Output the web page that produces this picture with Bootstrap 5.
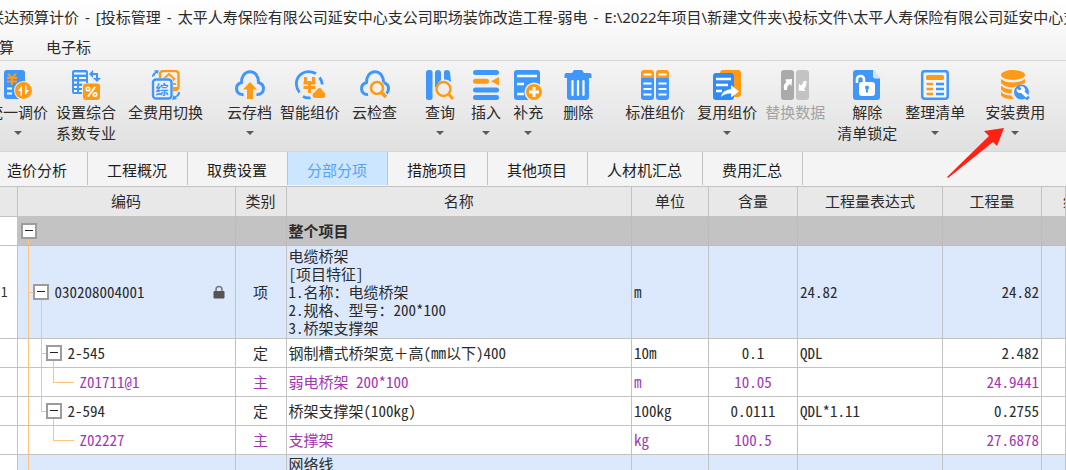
<!DOCTYPE html>
<html lang="zh-CN">
<head>
<meta charset="utf-8">
<meta name="viewport" content="width=device-width, initial-scale=1">
<title>投标管理</title>
<link href="https://cdn.jsdelivr.net/npm/bootstrap@5.3.0/dist/css/bootstrap.min.css" rel="stylesheet">
<script src="https://cdn.jsdelivr.net/npm/bootstrap@5.3.0/dist/js/bootstrap.bundle.min.js"></script>
<style>
:root{--line:#c3c3c3;--guide:#fcc47c}
body{font-family:"Noto Sans CJK SC",sans-serif;font-size:15px;line-height:21px;color:#2b2b2b;background:#fff;height:100vh;overflow:hidden}
.app-head{background:linear-gradient(#fff,#f1f1f1);border-bottom:1px solid #d6d6d6}
.title-line{font-family:"Noto Sans","Noto Sans CJK SC",sans-serif;height:34px;margin-left:-11px;white-space:nowrap}
.title-line .dash{margin:0 6px}
.menu-line{height:26px;margin-left:-16px;gap:32px;padding-bottom:2px}
.menu-line a{color:inherit;text-decoration:none}
.ribbon{background:linear-gradient(#f4f4f4,#e0e0e0);border-bottom:1px solid #d6d6d6;padding:9px 0 8px}
.tool{--bs-btn-padding-x:0;--bs-btn-padding-y:0;--bs-btn-border-width:0;--bs-btn-font-size:15px;--bs-btn-line-height:21px;--bs-btn-color:#2b2b2b;--bs-btn-disabled-color:#a3a3a3;--bs-btn-disabled-opacity:1;flex:none;white-space:nowrap;margin-right:12px}
.tool svg.ico{width:30px;height:30px;margin-bottom:1px}
.tool .caret{border:4px solid transparent;border-top-color:#5a5a5a;border-bottom:0;margin-top:9px}
.ribbon>.tool:first-child{margin-left:-12px}
.gap-s{margin-right:8px}.gap-m{margin-right:16px}.gap-l{margin-right:20px}.gap-xl{margin-right:28px}.gap-xxl{margin-right:32px}
.pointer{left:-39px;top:57px;width:60px;height:52px;pointer-events:none}
.tab-strip{background:#f4f4f4;border-bottom:1px solid var(--line);padding-bottom:1px}
.tab-strip .nav{margin-left:-12px}
.tab-strip .nav-link{color:#1c1c1c;border-radius:0;border-right:1px solid var(--line);padding:7px 20px 5px 19px;line-height:21px}
.tab-strip .nav-link.active{background:#cbe6fe;color:#55a3f8}
.bill{table-layout:fixed;width:100%;border-collapse:collapse;font-feature-settings:"hwid";line-height:18px}
.bill th,.bill td{border-right:1px solid var(--line);border-bottom:1px solid var(--line);height:29px;padding:0 2px;overflow:hidden;white-space:nowrap;vertical-align:middle}
.bill th{background:#e8e8e8;font-weight:400;text-align:center}
.bill .peek{padding-left:21px;text-align:left}
.bill .row-no{font-size:13px;padding:0 1px}
.bill .tall td{height:93px}
.bill .picked td:not(.row-no){background:#dce9fd}
.bill .whole td:not(.row-no){background:#c3c3c3;border-color:#bcbcbc}
.bill .material{color:#a435b4}
.bill .code{position:relative}
.wide-glyph{font-feature-settings:normal}
.box{width:16px;height:16px;border:2px solid #9c9c9c;background:#fff;padding:0;flex:none;position:relative;z-index:1}
.box::before{content:"";width:8px;height:1px;background:#222}
.branch{display:flex;align-items:center;gap:6px}
.lv0{padding-left:1px}.lv1{padding-left:13px}.lv2{padding-left:26px}.lv3{padding-left:60px}
.rail{position:absolute;top:0;bottom:0;width:1px;background:var(--guide)}
.rail.half{bottom:50%}.rail.low{top:50%}
.arm{position:absolute;top:50%;height:1px;width:6px;background:var(--guide)}
.arm.long{width:21px}
.at0{left:10px}.at1{left:23px}.at2{left:35px}
</style>
</head>
<body>
<header class="app-head">
  <div class="title-line d-flex align-items-center">联达预算计价<span class="dash">-</span>[投标管理<span class="dash">-</span>太平人寿保险有限公司延安中心支公司职场装饰改造工程-弱电<span class="dash">-</span>E:\2022年项目\新建文件夹\投标文件\太平人寿保险有限公司延安中心支公司</div>
  <nav class="menu-line d-flex align-items-center"><a href="#">预算</a><a href="#">电子标</a></nav>
</header>

<div class="ribbon d-flex align-items-start">
  <button type="button" class="btn tool gap-s d-flex flex-column align-items-center"><svg class="ico" viewBox="0 0 30 30"><rect x="1" width="21" height="29" rx="3" fill="#3f97fb"/><path d="M5 4l4 4 4-4M9 8v7M4 8h10M4 11.500h10" stroke="#ff9a17" stroke-width="2" fill="none"/><path d="M4 18.500h5M4 23.500h5" stroke="#fff" stroke-width="2"/><circle cx="20.500" cy="20.500" r="9.500" fill="#f0f0f0"/><circle cx="20.500" cy="20.500" r="8.500" fill="#ff9a17"/><path d="M19 25.500v-10l-4 5.500h2.500v4.500zM22 15.500v10l4-5.500h-2.500v-4.500z" fill="#fff"/></svg>统一调价<span class="caret"></span></button>
  <button type="button" class="btn tool d-flex flex-column align-items-center"><svg class="ico" viewBox="0 0 30 30"><path d="M3 0h12q2 0 2 2v11h-4q-2 0-2 2v9H3q-2 0-2-2V2q0-2 2-2z" fill="#3f97fb"/><path d="M3 3.500h12M3 8h3M8 8h7M3 12.500h3M8 12.500h7M3 17h3M8 17h3M3 21h3M8 21h3" stroke="#fff" stroke-width="2"/><path d="M22 0v8l-4-4zM30 8h-8l4 4z" fill="#3f97fb"/><path d="M21 4h5v5" stroke="#3f97fb" stroke-width="2" fill="none"/><rect x="12" y="13.500" width="17" height="16.500" rx="3" fill="#ff9a17"/><path d="M24 17l-7 9.500" stroke="#fff" stroke-width="2"/><circle cx="17" cy="19" r="1.700" fill="none" stroke="#fff" stroke-width="1.600"/><circle cx="24" cy="24.500" r="1.700" fill="none" stroke="#fff" stroke-width="1.600"/></svg>设置综合<span>系数专业</span></button>
  <button type="button" class="btn tool gap-l d-flex flex-column align-items-center me-4"><svg class="ico" viewBox="0 0 30 30"><rect x="9" y="1" width="18.500" height="19" rx="3" fill="none" stroke="#ff9a17" stroke-width="2.400"/><path d="M12 9.500l6-5.500 6 5.500M14 10h9M22 14h3M22 18h4" fill="none" stroke="#ff9a17" stroke-width="2"/><rect x="0" y="8" width="22" height="22" rx="3" fill="#f0f0f0"/><rect x="2" y="9.500" width="18.500" height="19" rx="3" fill="none" stroke="#3f97fb" stroke-width="2.400"/><text x="4.500" y="24" font-size="13" font-weight="700" fill="#3f97fb">综</text><path d="M1 7q0-3.500 3-5l-1-1.500L7.500 0 7 4 5.500 3Q4 4 3.500 6zM29 22q0 4-4 5.500l1 1.500-5 1 1.500-5 1 1.500q3-1 3.500-4.500z" fill="#3f97fb"/></svg>全费用切换</button>
  <button type="button" class="btn tool gap-s d-flex flex-column align-items-center"><svg class="ico" viewBox="0 0 30 30"><path d="M8.500 24.500C4 25 1.500 22 1.500 18.500c0-3 2-5 5-6C6.500 6 10 1.700 15 1.700S23.500 6 23.500 12.500c3 1 5 3 5 6 0 3.500-2.500 6.500-7 6" fill="none" stroke="#3f97fb" stroke-width="3"/><path d="M15 12l7 7.500h-4V29h-6v-9.500H8z" fill="#ff9a17"/></svg>云存档<span class="caret"></span></button>
  <button type="button" class="btn tool d-flex flex-column align-items-center"><svg class="ico" viewBox="0 0 30 30"><path d="M4.500 22.500C-.5 16 .5 7 7.500 3.200c4-2.200 8-2.200 13.500.3M24.500 7.500q2.500 3 2.800 7M8 26.500q3.500 2 7.500 1.200" fill="none" stroke="#3f97fb" stroke-width="2.800"/><path d="M10.500 7v5M18.500 7v5M8.500 13h12M8.500 17.500h12M14.500 11v12" fill="none" stroke="#ff9a17" stroke-width="3"/><path d="M20.500 28q-3 0-3-3 0-2 2.500-3l3-3.500q1.500-1 3 0l2.500 3.500q2 1 2 3 0 3-3 3z" fill="#ff9a17"/></svg>智能组价</button>
  <button type="button" class="btn tool gap-xl d-flex flex-column align-items-center"><svg class="ico" viewBox="0 0 30 30"><path d="M8 24.500C4 25 1.500 22 1.500 18.500c0-3 2-5 5-6C6.500 6 10 1.700 15 1.700S23.500 6 23.500 12.500c3 1 5 3 5 6q0 3-2 5" fill="none" stroke="#3f97fb" stroke-width="3"/><circle cx="17" cy="18" r="8" fill="#f0f0f0"/><circle cx="17" cy="18" r="6" fill="none" stroke="#ff9a17" stroke-width="2.600"/><path d="M21 22l5 5" stroke="#ff9a17" stroke-width="3.500"/></svg>云检查</button>
  <button type="button" class="btn tool gap-m d-flex flex-column align-items-center"><svg class="ico" viewBox="0 0 30 30"><rect x="1" width="6.500" height="30" rx="2.500" fill="#3f97fb"/><path d="M10 3q0-3 3-3t3 3v7l-3 3v4h-3zM19 2q0-2 3-2 2.500 0 3 2l1 10q-3-3-7-2.500z" fill="#3f97fb"/><circle cx="18.500" cy="19" r="7" fill="none" stroke="#ff9a17" stroke-width="2.500"/><path d="M23.500 24l4.500 5" stroke="#ff9a17" stroke-width="3"/></svg>查询<span class="caret"></span></button>
  <button type="button" class="btn tool d-flex flex-column align-items-center"><svg class="ico" viewBox="0 0 30 30"><path d="M4.500 2.500h21M4.500 20h21M4.500 27.500h21" stroke="#3f97fb" stroke-width="5" stroke-linecap="round"/><path d="M4.500 11.300h11" stroke="#ff9a17" stroke-width="5" stroke-linecap="round"/><path d="M20 11.300L28 7v8.600z" fill="#ff9a17"/></svg>插入<span class="caret"></span></button>
  <button type="button" class="btn tool gap-l d-flex flex-column align-items-center"><svg class="ico" viewBox="0 0 30 30"><rect x="1" width="26" height="30" rx="3" fill="#3f97fb"/><path d="M4 6h20M4 14h7M4 24h7" stroke="#fff" stroke-width="2.500"/><circle cx="21" cy="22" r="9.500" fill="#f0f0f0"/><circle cx="21" cy="22" r="8" fill="#ff9a17"/><path d="M16 22h10M21 17v10" stroke="#fff" stroke-width="3"/></svg>补充<span class="caret"></span></button>
  <button type="button" class="btn tool gap-xxl d-flex flex-column align-items-center"><svg class="ico" viewBox="0 0 30 30"><path d="M9 3l2-3h8l2 3h5.500q2 0 2 2v3H26v19q0 3-3 3H7q-3 0-3-3V8H1.500V5q0-2 2-2z" fill="#3f97fb"/><path d="M9.500 11v14M15 11v14M20.500 11v14" stroke="#fff" stroke-width="2.200" stroke-linecap="round"/></svg>删除</button>
  <button type="button" class="btn tool d-flex flex-column align-items-center"><svg class="ico" viewBox="0 0 30 30"><path d="M1 8V3q0-3 3-3h7q3 0 3 3v5zM16 8V3q0-3 3-3h7q3 0 3 3v5z" fill="#ff9a17"/><path d="M1 8h13v19q0 3-3 3H4q-3 0-3-3zM16 8h13v19q0 3-3 3h-7q-3 0-3-3z" fill="#3f97fb"/><path d="M3.500 4.500h8M18.500 4.500h8M3.500 13.500h8M18.500 13.500h8M3.500 19h8M18.500 19h8M3.500 24.500h8M18.500 24.500h8" stroke="#fff" stroke-width="2"/></svg>标准组价</button>
  <button type="button" class="btn tool gap-s d-flex flex-column align-items-center"><svg class="ico" viewBox="0 0 30 30"><rect x="8" width="21" height="27" rx="3" fill="#ff9a17"/><rect x="1" y="3" width="21" height="27" rx="3" fill="#2f8bf8"/><path d="M4 9h15M4 15h12M4 21h6" stroke="#fff" stroke-width="2.500"/><path d="M9 27q1-7 10-8v-4l8 6.500-8 6v-4q-6-.5-10 3.500z" fill="#fff"/></svg>复用组价<span class="caret"></span></button>
  <button type="button" class="btn tool d-flex flex-column align-items-center" disabled><svg class="ico" viewBox="0 0 30 30"><rect x="1" width="13" height="30" rx="3" fill="#aaa"/><rect x="16" width="13" height="30" rx="3" fill="#c3c3c3"/><path d="M4 20q-1-6 2.500-8L5 9.500l7-.5-.5 7-2-2Q7 16 7 20zM26.500 11q0 6-2.500 8l1.500 2-7-.5.5-7 2 2Q23 14 23.500 11z" fill="#fff"/></svg>替换数据</button>
  <button type="button" class="btn tool gap-s d-flex flex-column align-items-center"><svg class="ico" viewBox="0 0 30 30"><path d="M4 0h17l7 8v19q0 3-3 3H4q-3 0-3-3V3q0-3 3-3z" fill="#3f97fb"/><path d="M21 0l8 8.500h-6q-2 0-2-2z" fill="#cfe6ff"/><rect x="7" y="12" width="16" height="14" rx="3" fill="#fff"/><path d="M5 13V9.500q0-3.500 3.500-3.500T12 9.500V13" fill="none" stroke="#fff" stroke-width="2.600"/><circle cx="15" cy="17.500" r="2" fill="#3f97fb"/><path d="M15 18v4.500" stroke="#3f97fb" stroke-width="2"/></svg>解除<span>清单锁定</span></button>
  <button type="button" class="btn tool gap-l d-flex flex-column align-items-center"><svg class="ico" viewBox="0 0 30 30"><rect x="2.200" y="1.200" width="25.500" height="27.500" rx="2.500" fill="#eef6ff" stroke="#3f97fb" stroke-width="2.500"/><rect x="6" y="5" width="18" height="5" rx="1.500" fill="#ff9a17"/><path d="M6.500 14H13M6.500 19H13M6.500 24H13" stroke="#ff9a17" stroke-width="2.500"/><path d="M16 14h8M16 19h8M16 24h8" stroke="#3f97fb" stroke-width="2.500"/></svg>整理清单<span class="caret"></span></button>
  <div class="position-relative">
    <button type="button" class="btn tool d-flex flex-column align-items-center me-0"><svg class="ico" viewBox="0 0 30 30"><ellipse cx="13" cy="5" rx="12" ry="5" fill="#ff9a17"/><path d="M1 9q4 3.500 12 3.500T25 9v4q-3 1.500-6 2-4 2-6 2.500-8 0-12-4.500zM1 15.500q4 4 11 4l-.5 4Q4 23.500 1 19.500zM1 21.500q3 4 10.500 4l2 3.500Q4 29.500 1 25.500z" fill="#ff9a17"/><circle cx="21.500" cy="22" r="7.500" fill="#3f97fb"/><path d="M28.500 29L23 24" stroke="#3f97fb" stroke-width="4"/><path d="M26 27.500L21 23q-3 .5-4-1.500-.700-1.500 0-3l2.500 2 2-1.500-2-2.500q3-1 4.700 1t.3 4l4 4" fill="#fff"/></svg>安装费用<span class="caret"></span></button>
    <svg class="pointer position-absolute" viewBox="0 0 60 52"><path d="M58 1L38 4l5 5L1 50l1 1 45-36 4 4z" fill="#ff2113"/></svg>
  </div>
</div>

<div class="tab-strip">
  <ul class="nav flex-nowrap text-nowrap">
    <li class="nav-item"><a class="nav-link" href="#">造价分析</a></li>
    <li class="nav-item"><a class="nav-link" href="#">工程概况</a></li>
    <li class="nav-item"><a class="nav-link" href="#">取费设置</a></li>
    <li class="nav-item"><a class="nav-link active" aria-current="page" href="#">分部分项</a></li>
    <li class="nav-item"><a class="nav-link" href="#">措施项目</a></li>
    <li class="nav-item"><a class="nav-link" href="#">其他项目</a></li>
    <li class="nav-item"><a class="nav-link" href="#">人材机汇总</a></li>
    <li class="nav-item"><a class="nav-link" href="#">费用汇总</a></li>
  </ul>
</div>

<table class="bill">
  <colgroup><col style="width:17px"><col style="width:218px"><col style="width:51px"><col><col style="width:77px"><col style="width:89px"><col style="width:145px"><col style="width:99px"><col style="width:24px"></colgroup>
  <thead>
    <tr><th></th><th>编码</th><th>类别</th><th>名称</th><th>单位</th><th>含量</th><th>工程量表达式</th><th>工程量</th><th class="peek">综</th></tr>
  </thead>
  <tbody>
    <tr class="whole"><td class="row-no"></td><td class="code"><span class="rail low at0"></span><div class="branch lv0"><button type="button" class="box d-flex align-items-center justify-content-center" aria-label="折叠"></button></div></td><td></td><td class="fw-bold">整个项目</td><td></td><td></td><td></td><td></td><td></td></tr>
    <tr class="picked tall"><td class="row-no">1</td><td class="code"><span class="rail at0"></span><span class="arm at0"></span><span class="rail low at1"></span><div class="branch lv1"><button type="button" class="box d-flex align-items-center justify-content-center" aria-label="折叠"></button><span>030208004001</span><svg class="ms-auto me-2" width="12" height="14" viewBox="0 0 12 14"><path d="M3 7V4.500Q3 1.500 6 1.500t3 3V7" fill="none" stroke="#777" stroke-width="1.500"/><rect x=".5" y="6" width="11" height="7.500" rx="1" fill="#555"/></svg></div></td><td class="text-center">项</td><td>电缆桥架<br>[项目特征]<br>1.名称：电缆桥架<br>2.规格、型号：200*100<br>3.桥架支撑架</td><td>m</td><td></td><td>24.82</td><td class="text-end">24.82</td><td></td></tr>
    <tr><td class="row-no"></td><td class="code"><span class="rail at0"></span><span class="rail at1"></span><span class="arm at1"></span><span class="rail low at2"></span><div class="branch lv2"><button type="button" class="box d-flex align-items-center justify-content-center" aria-label="折叠"></button><span>2-545</span></div></td><td class="text-center">定</td><td>钢制槽式桥架宽<span class="wide-glyph">＋</span>高(mm以下)400</td><td>10m</td><td class="text-center">0.1</td><td>QDL</td><td class="text-end">2.482</td><td></td></tr>
    <tr class="material"><td class="row-no"></td><td class="code"><span class="rail at0"></span><span class="rail at1"></span><span class="rail half at2"></span><span class="arm long at2"></span><div class="lv3">Z01711@1</div></td><td class="text-center">主</td><td>弱电桥架 200*100</td><td>m</td><td class="text-center">10.05</td><td></td><td class="text-end">24.9441</td><td></td></tr>
    <tr><td class="row-no"></td><td class="code"><span class="rail at0"></span><span class="rail half at1"></span><span class="arm at1"></span><span class="rail low at2"></span><div class="branch lv2"><button type="button" class="box d-flex align-items-center justify-content-center" aria-label="折叠"></button><span>2-594</span></div></td><td class="text-center">定</td><td>桥架支撑架(100kg)</td><td>100kg</td><td class="text-center">0.0111</td><td>QDL*1.11</td><td class="text-end">0.2755</td><td></td></tr>
    <tr class="material"><td class="row-no"></td><td class="code"><span class="rail at0"></span><span class="rail half at2"></span><span class="arm long at2"></span><div class="lv3">Z02227</div></td><td class="text-center">主</td><td>支撑架</td><td>kg</td><td class="text-center">100.5</td><td></td><td class="text-end">27.6878</td><td></td></tr>
    <tr class="picked tall"><td class="row-no"></td><td class="code"><span class="rail at0"></span></td><td></td><td class="align-top">网络线</td><td></td><td></td><td></td><td></td><td></td></tr>
  </tbody>
</table>
</body>
</html>
